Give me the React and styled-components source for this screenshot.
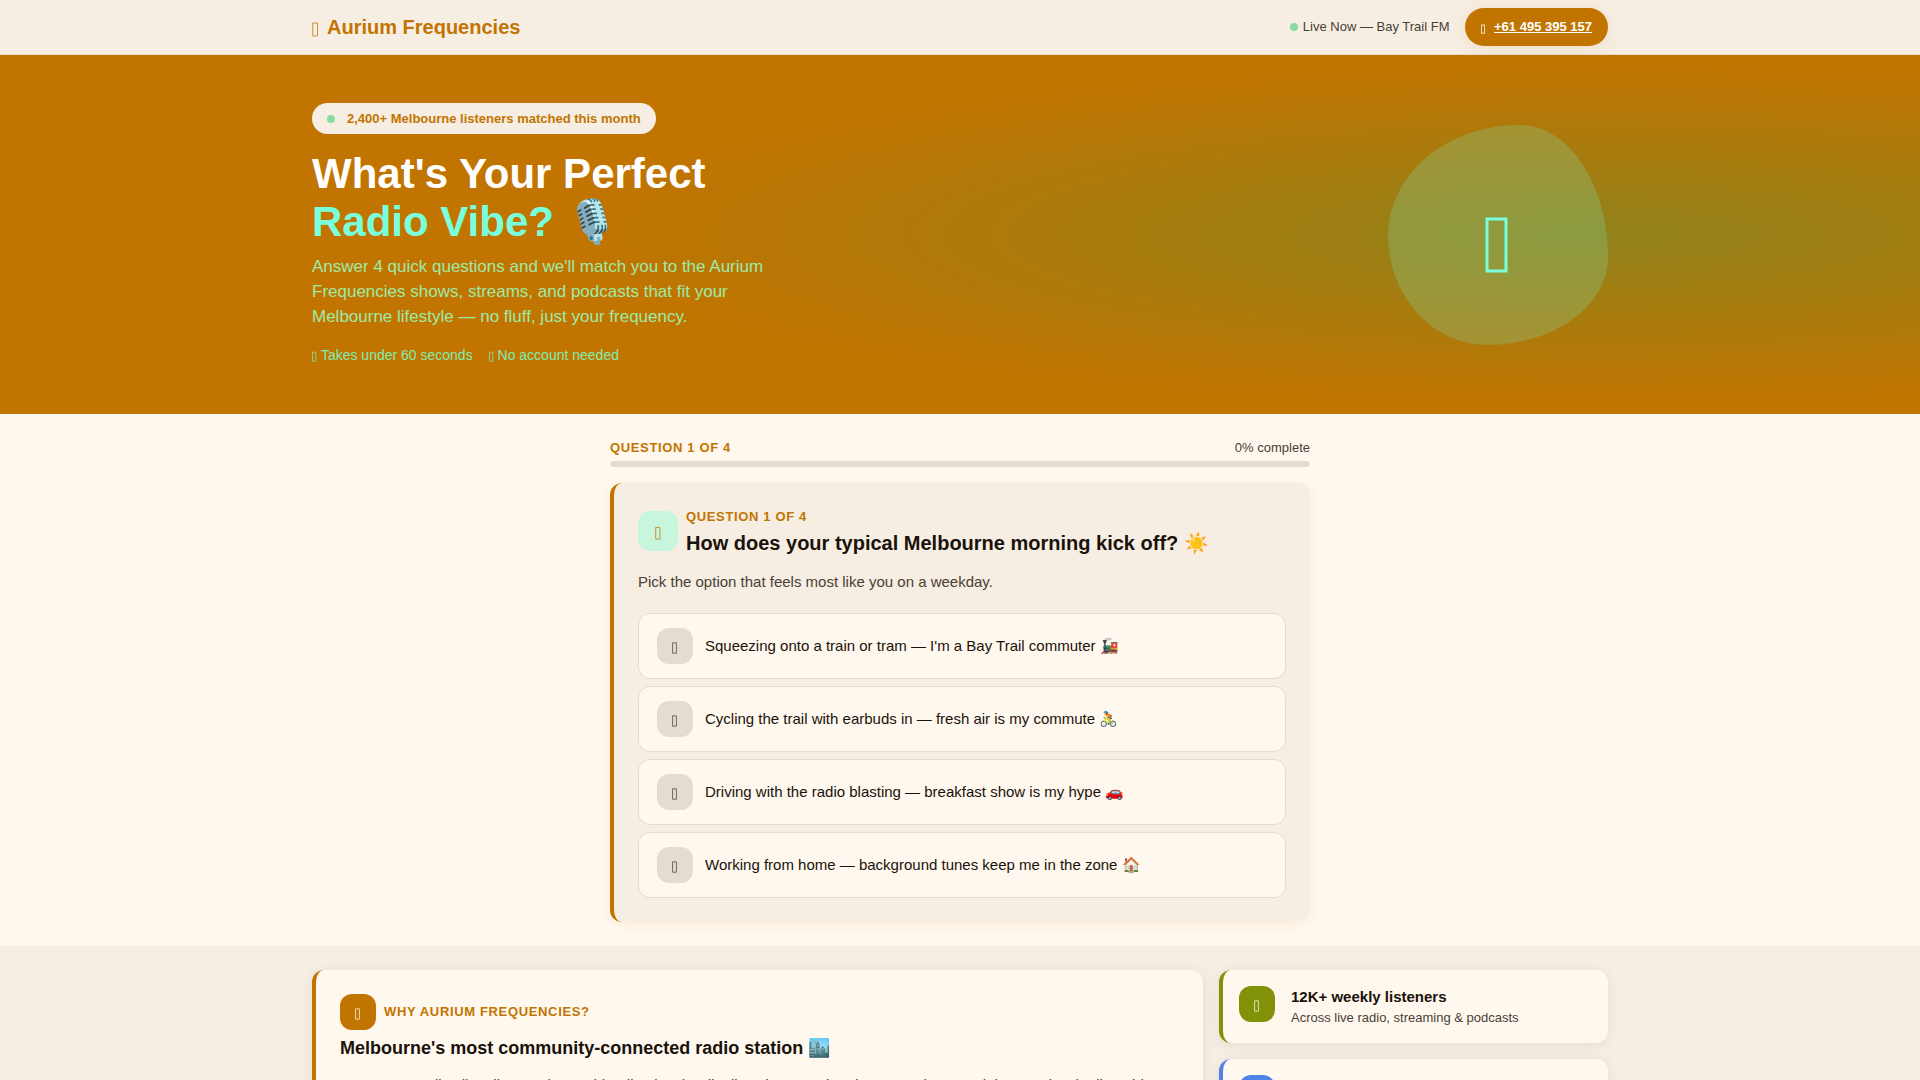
import React from 'react'
import styled, { createGlobalStyle } from 'styled-components'

const GlobalStyle = createGlobalStyle`
*{
  box-sizing:border-box;
  margin:0;
  padding:0;
}

body{
  font-family:"Liberation Sans", Arial, sans-serif;
  font-size:16px;
  line-height:1.6;
  color:#1a120b;
  background:#fff8ee;
}
`

const options = [
  "Squeezing onto a train or tram — I'm a Bay Trail commuter 🚂",
  'Cycling the trail with earbuds in — fresh air is my commute 🚴',
  'Driving with the radio blasting — breakfast show is my hype 🚗',
  'Working from home — background tunes keep me in the zone 🏠',
]

const stats = [
  { color: '#819208', title: '12K+ weekly listeners', text: 'Across live radio, streaming & podcasts' },
  { color: '#4f83e8', title: 'Bay Trail coverage', text: 'Broadcasting right across Melbourne' },
]

function Icon({ size = 16, stroke = 1 }) {
  return (
    <IconSvg viewBox="0 0 28 80" $size={size} aria-hidden="true">
      <rect x="3" y="24" width="19" height="52" strokeWidth={stroke} vectorEffect="non-scaling-stroke" />
    </IconSvg>
  )
}

function App() {
  const answered = 0

  return (
    <>
      <GlobalStyle />
      <Header>
        <HeaderInner>
          <Logo href="#">
            <Icon size={20} />
            <span>Aurium Frequencies</span>
          </Logo>
          <HeaderRight>
            <Live>
              <Dot />
              Live Now — Bay Trail FM
            </Live>
            <Phone href="tel:+61495395157">
              <Icon size={13} />
              <u>+61 495 395 157</u>
            </Phone>
          </HeaderRight>
        </HeaderInner>
      </Header>

      <main>
        <Hero>
          <HeroInner>
            <HeroText>
              <Badge>
                <Dot />
                2,400+ Melbourne listeners matched this month
              </Badge>
              <Title>
                What's Your Perfect<br />
                <span>Radio Vibe?</span> 🎙️
              </Title>
              <Lead>
                Answer 4 quick questions and we'll match you to the Aurium Frequencies
                shows, streams, and podcasts that fit your Melbourne lifestyle — no fluff,
                just your frequency.
              </Lead>
              <Perks>
                <li><Icon size={14} /> Takes under 60 seconds</li>
                <li><Icon size={14} /> No account needed</li>
              </Perks>
            </HeroText>
            <Blob><Icon size={80} stroke={3} /></Blob>
          </HeroInner>
        </Hero>

        <Quiz>
          <ProgressTop>
            <Label id="step">Question 1 of 4</Label>
            <span>{answered}% complete</span>
          </ProgressTop>
          <Track role="progressbar" aria-labelledby="step" aria-valuenow={answered}>
            <Fill style={{ width: `${answered}%` }} />
          </Track>
          <QuestionCard>
            <QuestionHead>
              <QuestionIcon><Icon size={18} /></QuestionIcon>
              <div>
                <Label>Question 1 of 4</Label>
                <Question>How does your typical Melbourne morning kick off? ☀️</Question>
              </div>
            </QuestionHead>
            <Hint>Pick the option that feels most like you on a weekday.</Hint>
            <Options>
              {options.map((option) => (
                <Option key={option} type="button">
                  <OptionIcon><Icon /></OptionIcon>
                  <span>{option}</span>
                </Option>
              ))}
            </Options>
          </QuestionCard>
        </Quiz>

        <About>
          <AboutInner>
            <WhyCard>
              <WhyHead>
                <Tile $color="#c27400"><Icon /></Tile>
                <Label>Why Aurium Frequencies?</Label>
              </WhyHead>
              <WhyTitle>Melbourne's most community-connected radio station 🏙️</WhyTitle>
              <WhyText>
                Our streams all call Melbourne home, blending local radio, live shows and
                podcasts made around the people who live, ride and work along the Bay Trail.
              </WhyText>
            </WhyCard>
            <Stats>
              {stats.map((stat) => (
                <StatCard key={stat.title} $color={stat.color}>
                  <Tile $color={stat.color}><Icon /></Tile>
                  <div>
                    <StatTitle>{stat.title}</StatTitle>
                    <StatText>{stat.text}</StatText>
                  </div>
                </StatCard>
              ))}
            </Stats>
          </AboutInner>
        </About>
      </main>
    </>
  )
}

export default App

const IconSvg = styled.svg`
flex:none;
height:${(props) => props.$size}px;
fill:none;
stroke:currentColor;
opacity:${(props) => (props.$size > 40 ? 1 : 0.75)};
`

const Dot = styled.span`
flex:none;
width:8px;
height:8px;
border-radius:50%;
background:#8adba0;
`

const Label = styled.p`
font-size:13px;
font-weight:700;
line-height:20px;
letter-spacing:0.05em;
text-transform:uppercase;
color:#c27400;
`

const Header = styled.header`
background:#f6eee3;
border-bottom:1px solid #e4dbd2;
`

const HeaderInner = styled.div`
display:flex;
align-items:center;
justify-content:space-between;
max-width:1296px;
margin:0 auto;
padding:8px 0;
`

const Logo = styled.a`
display:flex;
align-items:center;
gap:8px;
font-size:20px;
font-weight:700;
color:#c27400;
text-decoration:none;
`

const HeaderRight = styled.div`
display:flex;
align-items:center;
gap:16px;
`

const Live = styled.div`
display:flex;
align-items:center;
gap:5px;
font-size:13px;
color:#4a4035;
`

const Phone = styled.a`
display:flex;
align-items:center;
gap:8px;
padding:8px 16px;
border-radius:20px;
font-size:13px;
font-weight:700;
line-height:22px;
color:#fff;
background:#c27400;
box-shadow:0 2px 16px rgba(194,116,0,0.12);
text-decoration:none;
`

const Hero = styled.section`
padding:48px 0;
background:radial-gradient(54% 48% at 83% 50%, rgba(72,151,65,0.4) 0%, rgba(72,151,65,0) 100%) #c27400;
`

const HeroInner = styled.div`
display:flex;
align-items:center;
justify-content:space-between;
max-width:1296px;
margin:0 auto;
`

const HeroText = styled.div`
max-width:480px;
`

const Badge = styled.div`
display:inline-flex;
align-items:center;
gap:12px;
padding:5px 15px;
border-radius:16px;
font-size:13px;
font-weight:700;
line-height:21px;
color:#c27400;
background:#f6eee3;
`

const Title = styled.h1`
margin:16px 0 8px;
font-size:42px;
line-height:48px;
color:#fff;

span{
  color:#7affdc;
}
`

const Lead = styled.p`
margin-bottom:15px;
font-size:17px;
line-height:25px;
color:#9ceba6;
`

const Perks = styled.ul`
display:flex;
gap:16px;
list-style:none;
font-size:14px;
line-height:22px;
color:#7deeb0;

li{
  display:flex;
  align-items:center;
  gap:4px;
}
`

const Blob = styled.div`
display:flex;
align-items:center;
justify-content:center;
width:220px;
height:220px;
border-radius:60% 40% 55% 45% / 50% 60% 40% 50%;
color:#7affdc;
background:rgba(122,255,220,0.2);
`

const Quiz = styled.section`
max-width:700px;
margin:0 auto;
padding:24px 0;
`

const ProgressTop = styled.div`
display:flex;
justify-content:space-between;
margin-bottom:3px;
font-size:13px;
line-height:20px;
color:#4a4035;
`

const Track = styled.div`
height:6px;
margin-bottom:16px;
border-radius:3px;
background:#e4dbd2;
overflow:hidden;
`

const Fill = styled.div`
height:100%;
background:#c27400;
`

const QuestionCard = styled.div`
padding:24px;
border-left:4px solid #c27400;
border-radius:12px;
background:#f6eee3;
box-shadow:0 2px 12px rgba(194,116,0,0.08);
`

const QuestionHead = styled.div`
display:flex;
align-items:flex-start;
gap:8px;
margin-bottom:12px;
`

const QuestionIcon = styled.div`
display:flex;
align-items:center;
justify-content:center;
flex:none;
width:40px;
height:40px;
margin-top:4px;
border-radius:12px;
color:#c27400;
background:#c8f6dd;
`

const Question = styled.h2`
font-size:20px;
line-height:32px;
`

const Hint = styled.p`
margin-bottom:20px;
font-size:15px;
line-height:22px;
color:#4a4035;
`

const Options = styled.div`
display:grid;
gap:7px;
`

const Option = styled.button`
display:flex;
align-items:center;
gap:12px;
padding:14px 18px;
border:1px solid #e4dbd2;
border-radius:12px;
font:inherit;
font-size:15px;
text-align:left;
color:#1a120b;
background:#fff8ee;
cursor:pointer;

&:hover{
  border-color:#c27400;
}
`

const OptionIcon = styled.span`
display:flex;
align-items:center;
justify-content:center;
flex:none;
width:36px;
height:36px;
border-radius:12px;
color:#4a4035;
background:#e4dbd2;
`

const About = styled.section`
padding:24px 0;
background:#f6eee3;
`

const AboutInner = styled.div`
display:grid;
grid-template-columns:1fr 389px;
gap:16px;
max-width:1296px;
margin:0 auto;
`

const WhyCard = styled.article`
padding:24px;
border-left:4px solid #c27400;
border-radius:12px;
background:#fff8ee;
box-shadow:0 2px 12px rgba(74,64,53,0.1);
`

const WhyHead = styled.div`
display:flex;
align-items:center;
gap:8px;
margin-bottom:4px;
`

const Tile = styled.div`
display:flex;
align-items:center;
justify-content:center;
flex:none;
width:36px;
height:36px;
border-radius:12px;
color:#fff8ee;
background:${(props) => props.$color};
`

const WhyTitle = styled.h2`
margin-bottom:11px;
font-size:18px;
line-height:28px;
`

const WhyText = styled.p`
font-size:15px;
line-height:24px;
color:#4a4035;
`

const Stats = styled.div`
display:grid;
align-content:start;
gap:16px;
`

const StatCard = styled.article`
display:flex;
align-items:flex-start;
gap:16px;
padding:16px;
border-left:4px solid ${(props) => props.$color};
border-radius:12px;
background:#fff8ee;
box-shadow:0 2px 12px rgba(74,64,53,0.1);
`

const StatTitle = styled.h3`
font-size:15px;
line-height:22px;
`

const StatText = styled.p`
font-size:13px;
line-height:19px;
color:#4a4035;
`
